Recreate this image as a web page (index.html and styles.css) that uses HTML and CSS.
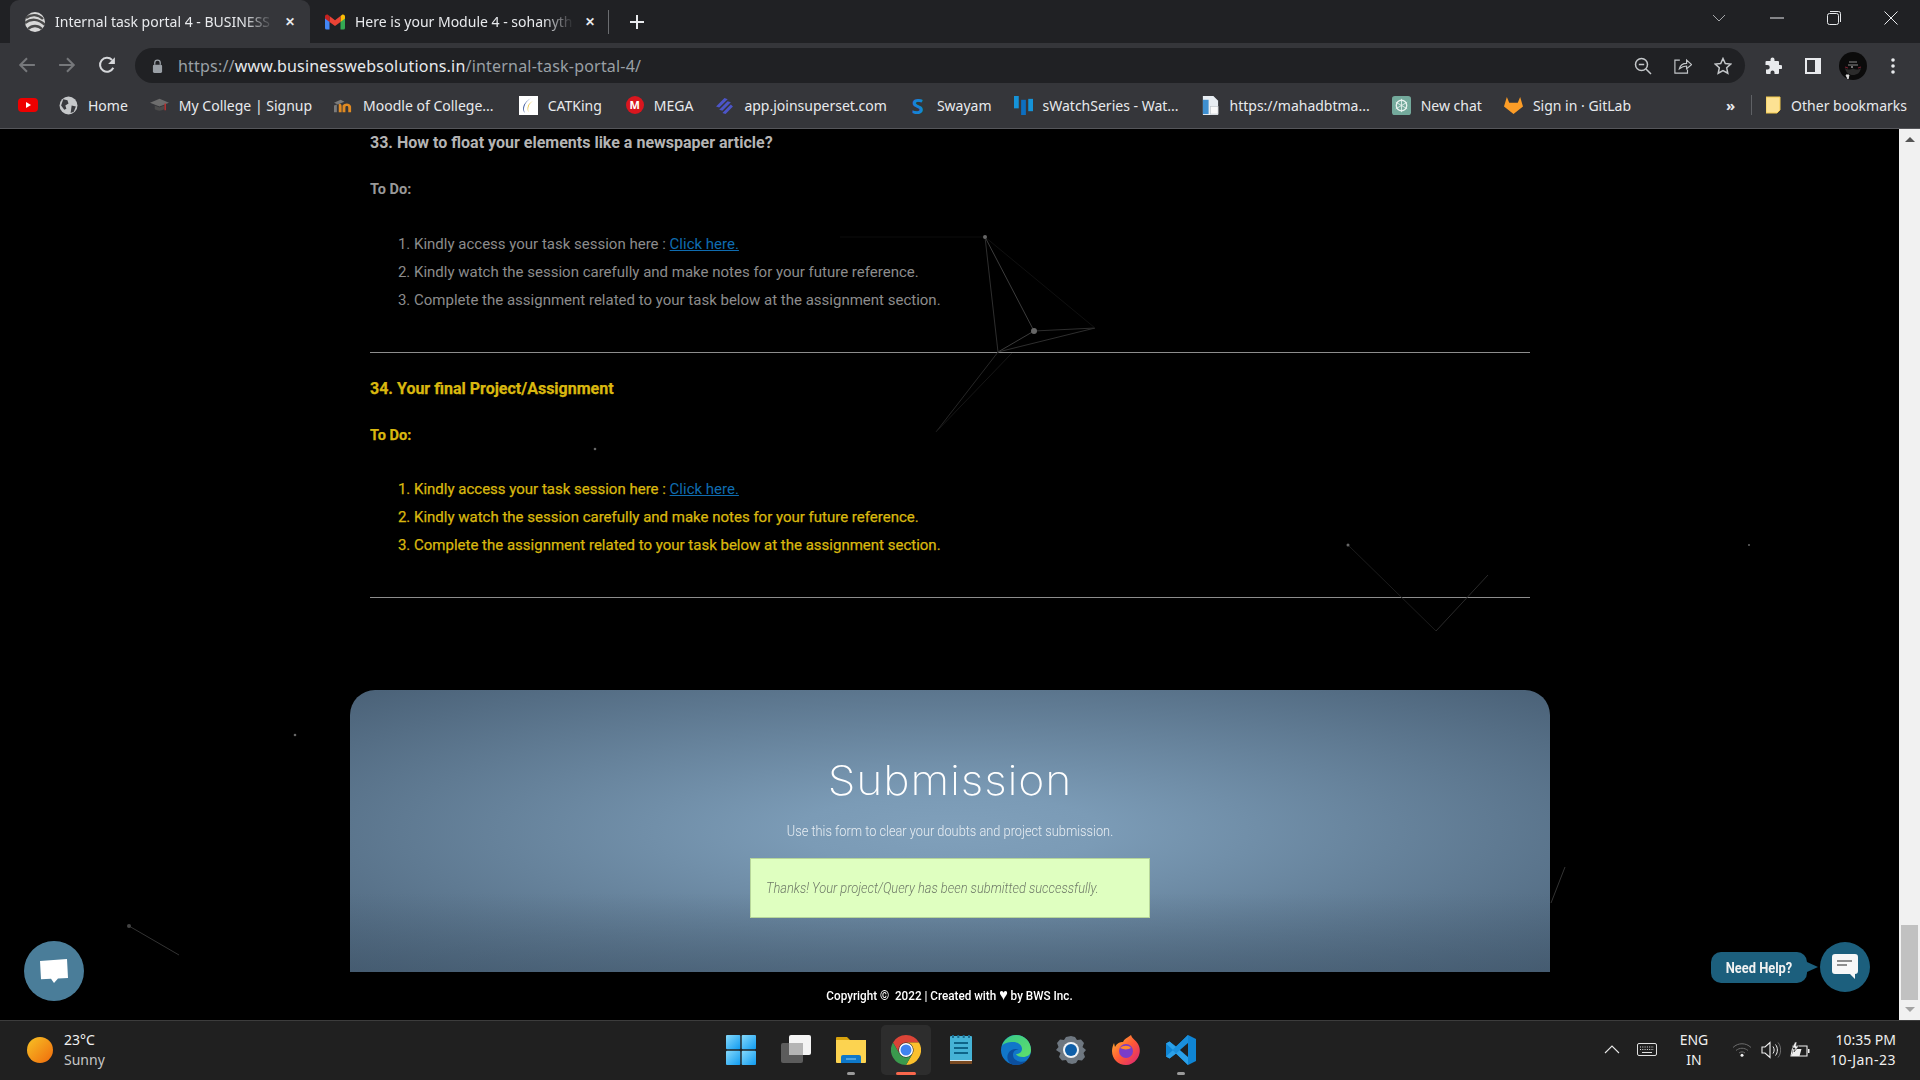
FILE: index.html
```html
<!DOCTYPE html>
<html>
<head>
    <title>Internal task portal 4 - BUSINESS WEB SOLUTIONS</title>
    <link rel="stylesheet" href="styles.css">
</head>
<body>
    <div class="tabstrip">
        <div class="tab tab-active">
            <svg class="favicon" viewBox="0 0 20 20"><circle cx="10" cy="10" r="10" fill="#d8d8d8"/><path d="M1 6c5-4 12-4 17 1M0 11c6-5 14-4 20 2M3 17c4-4 10-4 14 0" fill="none" stroke="#4a4a4a" stroke-width="2.4"/></svg>
            <span class="tab-title">Internal task portal 4 - BUSINESS</span>
            <span class="tab-close">&#10005;</span>
        </div>
        <div class="tab">
            <svg class="favicon" viewBox="0 0 20 16"><path d="M0 3v11a1.500 1.500 0 0 0 1.500 1.500H4.500V7z" fill="#4285f4"/><path d="M20 3v11a1.500 1.500 0 0 1-1.500 1.500H15.500V7z" fill="#34a853"/><path d="M15.500 2v6l4.500-3.500V2.500C20 .8 18 0 16.800 1z" fill="#fbbc04"/><path d="M4.500 8V2L10 6.200 15.500 2v6L10 12z" fill="#ea4335"/><path d="M0 4.500V2.500C0 .8 2 0 3.200 1L4.500 2v6z" fill="#c5221f"/></svg>
            <span class="tab-title">Here is your Module 4 - sohanyth</span>
            <span class="tab-close">&#10005;</span>
        </div>
        <span class="tab-divider"></span>
        <svg class="tab-plus" viewBox="0 0 14 14"><path d="M7 0v14M0 7h14" stroke="#e8eaed" stroke-width="2"/></svg>
        <div class="window-controls">
            <svg class="win-icon" viewBox="0 0 14 8"><path d="M1 1l6 6 6-6" fill="none" stroke="#a5a7aa" stroke-width="1"/></svg>
            <svg class="win-icon win-min" viewBox="0 0 14 14"><path d="M0 7h14" stroke="#e8eaed" stroke-width="1"/></svg>
            <svg class="win-icon win-restore" viewBox="0 0 14 14"><rect x=".5" y="2.500" width="11" height="11" rx="2" fill="none" stroke="#e8eaed"/><path d="M3 .5h8.500a2 2 0 0 1 2 2V11" fill="none" stroke="#e8eaed"/></svg>
            <svg class="win-icon win-close" viewBox="0 0 14 14"><path d="M.5.5l13 13M13.500.5l-13 13" stroke="#e8eaed" stroke-width="1"/></svg>
        </div>
    </div>

    <div class="toolbar">
        <svg class="nav-icon nav-back" viewBox="0 0 16 16"><path d="M15 8H2M8 2L2 8l6 6" fill="none" stroke="#76787b" stroke-width="1.800"/></svg>
        <svg class="nav-icon nav-forward" viewBox="0 0 16 16"><path d="M1 8h13M8 2l6 6-6 6" fill="none" stroke="#76787b" stroke-width="1.800"/></svg>
        <svg class="nav-icon nav-reload" viewBox="0 0 16 16"><path d="M13.600 10.500A6.200 6.200 0 1 1 12.500 3.500" fill="none" stroke="#d5d7da" stroke-width="1.800"/><path d="M15 1v6H9z" fill="#d5d7da"/></svg>
        <div class="omnibox">
            <svg class="lock" viewBox="0 0 12 15"><path d="M3 6V4a3 3 0 0 1 6 0v2" fill="none" stroke="#9aa0a6" stroke-width="1.400"/><rect x="1" y="6" width="10" height="9" rx="1.500" fill="#9aa0a6"/></svg>
            <span class="url"><span class="url-dim">https://</span>www.businesswebsolutions.in<span class="url-dim">/internal-task-portal-4/</span></span>
            <div class="omni-actions">
                <svg class="nav-icon" viewBox="0 0 18 18"><circle cx="7.500" cy="7.500" r="6" fill="none" stroke="#c4c7ca" stroke-width="1.500"/><path d="M4.800 7.500h5.400M12 12l5 5" stroke="#c4c7ca" stroke-width="1.500"/></svg>
                <svg class="nav-icon" viewBox="0 0 20 18"><path d="M6.500 2.500H1v14.500h14v-4" fill="none" stroke="#c4c7ca" stroke-width="1.300"/><path d="M6 12c1-4 4-6 8-6V2.500L19.500 7.500 14 12V9c-3 0-5.500 1-8 3z" fill="none" stroke="#c4c7ca" stroke-width="1.300"/></svg>
                <svg class="nav-icon" viewBox="0 0 18 18"><path d="M9 1.500l2.300 5 5.400.6-4 3.700 1.100 5.400L9 13.500l-4.800 2.700 1.100-5.400-4-3.700 5.400-.6z" fill="none" stroke="#c4c7ca" stroke-width="1.500"/></svg>
            </div>
        </div>
        <div class="toolbar-right">
            <svg class="tool-icon" viewBox="0 0 18 18"><path d="M6.500 2.500a2 2 0 0 1 4 0V4H14a1 1 0 0 1 1 1v3h1.500a2 2 0 0 1 0 4H15v4a1 1 0 0 1-1 1h-3.500v-1.500a2 2 0 0 0-4 0V17H3a1 1 0 0 1-1-1v-3.500h1.500a2.200 2.200 0 0 0 0-4.500H1.500V5a1 1 0 0 1 1-1h4z" fill="#e8eaed"/></svg>
            <svg class="tool-icon" viewBox="0 0 18 18"><rect x="1" y="1" width="16" height="16" fill="#e8eaed"/><rect x="3" y="3" width="8" height="12" fill="#35363a"/></svg>
            <svg class="avatar" viewBox="0 0 28 28"><circle cx="14" cy="14" r="14" fill="#0b0b0b"/><path d="M9 13h10M10 10h8" stroke="#8a8a8a" stroke-width="1"/><path d="M6 16c3 2 5 2 8 .5 3 1.500 5 1.500 8-.5-1 5-4 7-8 7s-7-2-8-7z" fill="#2b2b2b"/><path d="M7 23l2 4 1-4zM12 15h2" stroke="#ddd" fill="#ddd"/><path d="M6 15l3 1M19 16l3-1" stroke="#7a2030" stroke-width="1.200"/></svg>
            <svg class="tool-icon" viewBox="0 0 4 18"><circle cx="2" cy="3" r="1.800" fill="#e8eaed"/><circle cx="2" cy="9" r="1.800" fill="#e8eaed"/><circle cx="2" cy="15" r="1.800" fill="#e8eaed"/></svg>
        </div>
    </div>

    <div class="bookmarks">
        <div class="bm"><svg class="bm-yt" viewBox="0 0 20 14"><rect width="20" height="14" rx="4" fill="#e00"/><path d="M8 4l5 3-5 3z" fill="#fff"/></svg></div>
        <div class="bm"><svg class="bm-icon" viewBox="0 0 18 18"><circle cx="9" cy="9" r="8.500" fill="#c6c8ca"/><path d="M4 3l4 1 1 3-3 2 1 3-2 1-3-4zM12 9l4 1-2 5-3 1z" fill="#3a3b3f"/></svg><span>Home</span></div>
        <div class="bm"><svg class="bm-icon" viewBox="0 0 20 18"><path d="M0 6l10-4 10 4-10 4z" fill="#6d6d6d"/><path d="M5 9v4c3 2 7 2 10 0V9l-5 2z" fill="#4c4c4c"/><path d="M16 7v7" stroke="#b33" stroke-width="1.600"/></svg><span>My College | Signup</span></div>
        <div class="bm"><svg class="bm-icon" viewBox="0 0 20 18"><path d="M5 7a3 3 0 0 1 3 3v6h-3zM9 9c2-3 8-3 9 1v6h-3v-5c0-2-3-2-3 0v5H9z" fill="#e08a22"/><path d="M0 16V9l3-1v8z" fill="#7b7b7b"/><path d="M0 6l7-3 4 2-7 3z" fill="#7b7b7b"/></svg><span>Moodle of College...</span></div>
        <div class="bm bm-cat"><svg class="bm-icon" viewBox="0 0 20 20"><rect width="20" height="20" fill="#fff"/><path d="M13 2C6 6 4 12 6 18c-3-5-2-11 7-16z" fill="#1f3f8a"/><path d="M15 5c-5 3-6 8-5 12-2-4-1-9 5-12z" fill="#e2b71c"/></svg><span>CATKing</span></div>
        <div class="bm bm-meg"><span class="bm-mega">M</span><span>MEGA</span></div>
        <div class="bm"><svg class="bm-icon" viewBox="0 0 18 18"><path d="M1 10l8-8 3 1-8 8zM4 13l8-8 3 1-8 8zM7 16l8-8 2 2-7 7z" fill="#4c55c8"/></svg><span>app.joinsuperset.com</span></div>
        <div class="bm"><span class="bm-swayam">S</span><span>Swayam</span></div>
        <div class="bm"><svg class="bm-icon" viewBox="0 0 20 20"><rect x="0" y="0" width="5" height="13" fill="#1593d8"/><rect x="7.500" y="4" width="5" height="16" fill="#0d6fc0"/><rect x="15" y="3" width="5" height="13" fill="#1593d8"/></svg><span>sWatchSeries - Wat...</span></div>
        <div class="bm"><svg class="bm-icon" viewBox="0 0 20 20"><path d="M2 0h11l5 5v15H2z" fill="#e8edf2"/><rect x="2" y="4" width="6" height="15" fill="#3e8fd0"/><rect x="10" y="11" width="8" height="8" fill="#fafafa" stroke="#b8bec4" stroke-width=".6"/></svg><span>https://mahadbtma...</span></div>
        <div class="bm"><svg class="bm-icon" viewBox="0 0 20 20"><rect width="20" height="20" rx="3" fill="#74aa9c"/><circle cx="10" cy="10" r="5.500" fill="none" stroke="#e8f2ee" stroke-width="1.400"/><path d="M10 3v14M4 6.500l12 7M16 6.500l-12 7" stroke="#e8f2ee" stroke-width=".9"/></svg><span>New chat</span></div>
        <div class="bm"><svg class="bm-icon" viewBox="0 0 20 20"><path d="M3 1l2.500 6h9L17 1l3 10-10 8L0 11z" fill="#fc9d27"/></svg><span>Sign in · GitLab</span></div>
        <div class="bm-end">
            <span class="bm-more">&raquo;</span>
            <span class="bm-sep"></span>
            <div class="bm"><svg class="bm-folder" viewBox="0 0 15 18"><path d="M0 1h14v13l-3 3H0z" fill="#fde293" stroke="#f2c94c"/></svg><span>Other bookmarks</span></div>
        </div>
    </div>

    <div class="viewport">
        <div class="page">
            <main class="page-inner">
                <section class="task task-done">
                    <h3>33. How to float your elements like a newspaper article?</h3>
                    <p class="todo">To Do:</p>
                    <ol>
                        <li>Kindly access your task session here : <a href="#">Click here.</a></li>
                        <li>Kindly watch the session carefully and make notes for your future reference.</li>
                        <li>Complete the assignment related to your task below at the assignment section.</li>
                    </ol>
                </section>
                <hr class="rule">
                <section class="task task-current">
                    <h3>34. Your final Project/Assignment</h3>
                    <p class="todo">To Do:</p>
                    <ol>
                        <li>Kindly access your task session here : <a href="#">Click here.</a></li>
                        <li>Kindly watch the session carefully and make notes for your future reference.</li>
                        <li>Complete the assignment related to your task below at the assignment section.</li>
                    </ol>
                </section>
                <hr class="rule">
            </main>
            <section class="submission">
                <h2>Submission</h2>
                <p class="sub-lead">Use this form to clear your doubts and project submission.</p>
                <div class="success"><span>Thanks! Your project/Query has been submitted successfully.</span></div>
            </section>
            <footer class="copyright">Copyright &copy;&nbsp; 2022 | Created with <span class="heart">&#9829;</span> by BWS Inc.</footer>
        </div>

        <svg class="particles" viewBox="0 0 1899 891">
            <g transform="translate(0 -129)" fill="none">
                <path d="M840 237L985 237" stroke="#0c0c0c"/>
                <path d="M985 237L1034 331M1034 331L998 352" stroke="#3c3c3c"/>
                <path d="M985 237L998 352M1034 331L1095 328M1095 328L998 352" stroke="#2e2e2e"/>
                <path d="M985 237L1095 328" stroke="#101010"/>
                <path d="M998 352L936 432" stroke="#262626"/>
                <path d="M1012 353L936 432" stroke="#161616"/>
                <path d="M1348 545L1436 631" stroke="#1c1c1c"/>
                <path d="M1436 631L1488 575" stroke="#2a2a2a"/>
                <path d="M129 926L179 955" stroke="#333"/>
                <path d="M1565 867L1551 903" stroke="#333"/>
                <g fill="#666" stroke="none">
                    <circle cx="985" cy="237" r="2"/>
                    <circle cx="1034" cy="331" r="3"/>
                    <circle cx="595" cy="449" r="1.300"/>
                    <circle cx="295" cy="735" r="1.300"/>
                    <circle cx="1749" cy="545" r="1"/>
                    <circle cx="1348" cy="545" r="1.500"/>
                    <circle cx="129" cy="926" r="2" fill="#444"/>
                </g>
            </g>
        </svg>

        <div class="chat-left">
            <svg viewBox="0 0 30 26"><path d="M1 3l27-2 1 19-10 .5L15 25l-3-4.300-10 .5z" fill="#fff"/></svg>
        </div>
        <div class="help">
            <span class="help-label"><span>Need Help?</span></span>
            <div class="help-btn">
                <svg viewBox="0 0 26 26"><path d="M3 0h20a3 3 0 0 1 3 3v14a3 3 0 0 1-3 3v5l-5-5H3a3 3 0 0 1-3-3V3a3 3 0 0 1 3-3z" fill="#f7f7f7"/><path d="M5 7h15" stroke="#6a6a6a" stroke-width="1.500"/><path d="M5 11h10" stroke="#6a6a6a" stroke-width="1.500"/></svg>
            </div>
        </div>

        <div class="scrollbar">
            <span class="arrow-up"></span>
            <span class="thumb"></span>
            <span class="arrow-down"></span>
        </div>
    </div>

    <div class="taskbar">
        <div class="weather">
            <span class="sun"></span>
            <div class="weather-text">
                <span>23°C</span>
                <span class="weather-dim">Sunny</span>
            </div>
        </div>
        <div class="task-icons">
            <div class="task-app">
                <svg class="app-icon" viewBox="0 0 30 30"><defs><linearGradient id="win" x1="0" y1="0" x2="1" y2="1"><stop offset="0" stop-color="#86d9fb"/><stop offset="1" stop-color="#0f9bf0"/></linearGradient></defs><rect width="14.300" height="14.300" rx="1" fill="url(#win)"/><rect x="15.700" width="14.300" height="14.300" rx="1" fill="url(#win)"/><rect y="15.700" width="14.300" height="14.300" rx="1" fill="url(#win)"/><rect x="15.700" y="15.700" width="14.300" height="14.300" rx="1" fill="url(#win)"/></svg>
            </div>
            <div class="task-app">
                <svg class="app-icon" viewBox="0 0 30 30"><rect y="8" width="22" height="20" rx="2" fill="#5c5c5c"/><rect x="8" y="0" width="22" height="20" rx="2" fill="#f4f4f4"/><rect x="8" y="8" width="14" height="12" fill="#b5b5b5"/></svg>
            </div>
            <div class="task-app task-running">
                <svg class="app-icon" viewBox="0 0 30 30"><path d="M0 3a1 1 0 0 1 1-1h10l3 3H0z" fill="#d8a20d"/><path d="M0 5h30v22a1 1 0 0 1-1 1H1a1 1 0 0 1-1-1z" fill="#fcd350"/><path d="M5 22a2 2 0 0 1 2-2h16a2 2 0 0 1 2 2v6H5z" fill="#0e78c9"/><path d="M10 24h10" stroke="#8fd0f5" stroke-width="1"/></svg>
            </div>
            <div class="task-app task-active">
                <svg class="app-icon" viewBox="0 0 24 24"><path d="M12 0A12 12 0 0 1 22.400 6H12a6 6 0 0 0-5.200 9L1.600 6A12 12 0 0 1 12 0z" fill="#db4437"/><path d="M22.400 6A12 12 0 0 1 12 24l5.200-9A6 6 0 0 0 12 6z" fill="#fbc02d"/><path d="M12 24A12 12 0 0 1 1.600 6l5.200 9a6 6 0 0 0 10.400 0z" fill="#3a9a4d"/><circle cx="12" cy="12" r="5.600" fill="#fff"/><circle cx="12" cy="12" r="4.400" fill="#3f83f0"/></svg>
            </div>
            <div class="task-app">
                <svg class="app-icon app-notepad" viewBox="0 0 22 30"><rect y="1" width="22" height="28" rx="1" fill="#45b3d6"/><rect y="26" width="22" height="3" fill="#7a4a22"/><rect y="25" width="22" height="1" fill="#dfe8ec"/><path d="M3 0v3M8.300 0v3M13.700 0v3M19 0v3" stroke="#1b6e92" stroke-width="2"/><path d="M4 8h14M4 13h14M4 18h14" stroke="#0e6488" stroke-width="1.800"/></svg>
            </div>
            <div class="task-app">
                <svg class="app-icon" viewBox="0 0 30 30"><defs><linearGradient id="edge" x1="0" y1="0" x2="1" y2="1"><stop offset="0" stop-color="#37c98b"/><stop offset="1" stop-color="#60e06a"/></linearGradient></defs><circle cx="15" cy="15" r="15" fill="#1177c9"/><path d="M1 11C3 4 9 0 15 0c9 0 15 7 15 15 0 5-4 7-8 7s-6-1-7-3c3 0 6-2 6-5 0-3-3-7-9-7-5 0-9 1-11 4z" fill="url(#edge)"/><path d="M15 30C8 30 5 24 7 19c2-5 8-6 11-4-4-1-6 2-6 5 0 5 6 8 13 6-3 3-6 4-10 4z" fill="#0c4f9e"/></svg>
            </div>
            <div class="task-app">
                <svg class="app-icon" viewBox="0 0 30 30"><path d="M15 1l4 1 2 3 4-.5 3 3.500-1.500 4L30 15l-2.500 3 1.500 4-3 3.500-4-.5-2 3-4 1-4-1-2-3-4 .5-3-3.500 1.500-4L0 15l2.500-3L1 8l3-3.500L8 5l2-3z" fill="#6e7780"/><circle cx="15" cy="15" r="8" fill="#f0f3f5"/><circle cx="15" cy="15" r="6" fill="#0f5fa8"/></svg>
            </div>
            <div class="task-app">
                <svg class="app-icon" viewBox="0 0 30 30"><defs><linearGradient id="fox" x1="0" y1="0" x2="1" y2="1"><stop offset="0" stop-color="#ffbd2e"/><stop offset=".5" stop-color="#ff5a36"/><stop offset="1" stop-color="#d8207c"/></linearGradient></defs><path d="M20 0c1 4 5 5 7 9 3 5 2 11-1 15-3 4-7 6-11 6C7 30 1 24 1 16c0-3 1-6 2-8l1 4c2-4 5-5 8-5 1-3 4-4 8-7z" fill="url(#fox)"/><circle cx="15" cy="16" r="7" fill="#7a3cc9"/><path d="M9 13c3-3 9-3 11 0-2 1-5 2-8 1z" fill="#ff8a2e"/></svg>
            </div>
            <div class="task-app task-running">
                <svg class="app-icon" viewBox="0 0 30 30"><path d="M22 0l8 4v22l-8 4-12-11.500-6.500 5L0 21.500V8.500l3.500-2L10 11.500z" fill="#0f85d4"/><path d="M0 8.500l3.500-2L22 22v8l-12-11.500-6.500 5L0 21.500l7-6.500z" fill="#2ba0e8"/><path d="M22 8L10 18.500 6.500 15 22 0z" fill="#1a8fdc"/><path d="M22 8v14l-8-7z" fill="#202020"/></svg>
            </div>
        </div>
        <div class="tray">
            <svg class="tray-chev" viewBox="0 0 16 9"><path d="M1 8l7-7 7 7" fill="none" stroke="#e8e8e8" stroke-width="1.100"/></svg>
            <svg class="tray-kbd" viewBox="0 0 20 13"><rect x=".5" y=".5" width="19" height="12" rx="1.500" fill="none" stroke="#e0e0e0"/><path d="M3 4h14M3 6.500h14" stroke="#e0e0e0" stroke-dasharray="1 1.300"/><path d="M5 9.500h10" stroke="#e0e0e0"/></svg>
            <div class="tray-lang"><span>ENG</span><span>IN</span></div>
            <div class="tray-status">
                <svg class="tray-wifi" viewBox="0 0 20 15"><path d="M1 5.500c5-5 13-5 18 0M4 8.500c3.500-3 8.500-3 12 0M7 11c1.800-1.500 4.200-1.500 6 0" fill="none" stroke="#6b6b6b" stroke-width="1"/><circle cx="10" cy="13.300" r="1.500" fill="#f0f0f0"/></svg>
                <svg class="tray-vol" viewBox="0 0 20 18"><path d="M1 6h3l5-4.500v15L4 12H1z" fill="none" stroke="#f0f0f0" stroke-width="1.100"/><path d="M12 5.500c1.500 2 1.500 5 0 7M14.500 3.500c2.500 3 2.500 8 0 11" fill="none" stroke="#f0f0f0"/><path d="M17 1.500c3.500 4 3.500 11 0 15" fill="none" stroke="#6b6b6b"/></svg>
                <svg class="tray-batt" viewBox="0 0 20 16"><path d="M3 4h14v10H1z" fill="none" stroke="#f0f0f0" stroke-width="1.100"/><rect x="18" y="7" width="1.500" height="4" fill="#f0f0f0"/><path d="M1.500 14l2-7h8l-2 7z" fill="#f0f0f0"/><path d="M5 0L2 6h3L4 10l5-6H6l1-4z" fill="#f0f0f0" stroke="#202020" stroke-width=".6"/></svg>
            </div>
            <div class="tray-clock"><span>10:35 PM</span><span class="tray-date">10-Jan-23</span></div>
        </div>
    </div>
</body>
</html>
```

FILE: styles.css
```css
* {
    box-sizing: border-box;
}
html, body {
    margin: 0;
    height: 100%;
}
body {
    width: 1920px;
    height: 1080px;
    overflow: hidden;
    display: flex;
    flex-direction: column;
    background: #000;
    font-family: "Noto Sans", sans-serif;
    color: #e8eaed;
}

/* browser chrome */
.tabstrip {
    height: 43px;
    flex: none;
    display: flex;
    align-items: center;
    padding-left: 10px;
    background: #202124;
}
.tab {
    width: 300px;
    height: 43px;
    flex: none;
    display: flex;
    align-items: center;
    gap: 10px;
    padding: 0 14px 0 15px;
    font-size: 14px;
    border-radius: 9px 9px 0 0;
}
.tab-active {
    background: #35363a;
}
.favicon {
    width: 20px;
    height: 20px;
    flex: none;
}
.tab-title {
    flex: 1;
    min-width: 0;
    white-space: nowrap;
    -webkit-mask-image: linear-gradient(to right, #000 86%, transparent 100%);
    mask-image: linear-gradient(to right, #000 86%, transparent 100%);
}
.tab-close {
    flex: none;
    font-size: 12px;
    font-weight: 700;
    width: 12px;
    text-align: center;
}
.tab-divider {
    width: 1px;
    height: 24px;
    margin-left: -2px;
    background: #6b6d70;
}
.tab-plus {
    width: 14px;
    height: 14px;
    margin-left: 21px;
}
.window-controls {
    margin-left: auto;
    display: flex;
    align-items: center;
    align-self: flex-start;
    height: 36px;
    padding-right: 22px;
}
.win-icon {
    width: 14px;
    height: 14px;
    margin-left: 43px;
}
.win-min {
    margin-left: 44px;
}

.toolbar {
    height: 40px;
    flex: none;
    display: flex;
    align-items: flex-start;
    background: #35363a;
    padding-top: 5px;
}
.nav-icon {
    width: 18px;
    height: 18px;
    flex: none;
}
.nav-back {
    margin: 8px 0 0 18px;
}
.nav-forward {
    margin: 8px 0 0 22px;
}
.nav-reload {
    margin: 8px 0 0 22px;
}
.omnibox {
    width: 1610px;
    height: 35px;
    flex: none;
    margin-left: 19px;
    display: flex;
    align-items: center;
    padding-left: 17px;
    background: #202124;
    border-radius: 18px;
}
.lock {
    width: 11px;
    height: 14px;
}
.url {
    margin-left: 15px;
    font-size: 16px;
    letter-spacing: .2px;
    white-space: nowrap;
}
.url-dim {
    color: #9aa0a6;
}
.omni-actions {
    margin-left: auto;
    display: flex;
    gap: 22px;
    padding-right: 13px;
}
.toolbar-right {
    display: flex;
    align-items: center;
    height: 35px;
    padding-left: 19px;
}
.tool-icon {
    width: 18px;
    height: 18px;
    margin-right: 22px;
    flex: none;
}
.avatar {
    width: 28px;
    height: 28px;
    flex: none;
    margin: 0 17px 0 -5px;
}

.bookmarks {
    height: 46px;
    flex: none;
    display: flex;
    align-items: center;
    gap: 22px;
    padding: 0 13px 1px 18px;
    font-size: 14px;
    background: #35363a;
    border-bottom: 1px solid #55565a;
}
.bm {
    display: flex;
    align-items: center;
    gap: 10px;
    white-space: nowrap;
}
.bm-cat {
    margin-left: 3px;
}
.bm-meg {
    margin-left: 2px;
}
.bm-yt {
    width: 20px;
    height: 14px;
    margin-right: -1px;
}
.bm-icon {
    width: 19px;
    height: 19px;
    flex: none;
}
.bm-mega {
    width: 18px;
    height: 18px;
    border-radius: 50%;
    background: #d9161e;
    color: #fff;
    font-size: 11px;
    font-weight: 700;
    line-height: 18px;
    text-align: center;
}
.bm-swayam {
    width: 18px;
    color: #1584d6;
    font-size: 22px;
    font-weight: 700;
    line-height: 20px;
    text-align: center;
}
.bm-end {
    margin-left: auto;
    display: flex;
    align-items: center;
}
.bm-more {
    font-size: 15px;
    font-weight: 700;
    margin-right: 16px;
}
.bm-sep {
    width: 1px;
    height: 20px;
    background: #5f6165;
    margin-right: 14px;
}
.bm-folder {
    width: 15px;
    height: 18px;
}

/* page */
.viewport {
    position: relative;
    flex: 1;
    display: flex;
    overflow: hidden;
    background: #000;
}
.page {
    width: 1899px;
    flex: none;
    overflow: hidden;
    font-family: Roboto, sans-serif;
}
.page-inner {
    width: 1160px;
    margin-left: 370px;
}
.task h3 {
    margin: 0;
    padding-top: 1px;
    font-size: 16px;
    font-weight: 700;
    line-height: 26px;
}
.todo {
    margin: 21px 0 0;
    font-size: 14.5px;
    font-weight: 700;
    line-height: 26px;
}
.task ol {
    margin: 27px 0 0;
    padding-left: 44px;
    font-size: 15px;
    line-height: 28px;
}
.task a {
    color: #0f6cb0;
}
.task-done {
    color: #8c8c8c;
}
.task-done h3 {
    color: #b4b4b4;
}
.task-done .todo {
    color: #999;
}
.task-current {
    color: #d9b80f;
    -webkit-text-stroke: .25px #d9b80f;
}
.task-current a {
    -webkit-text-stroke: 0;
}
.task-current ol {
    margin-top: 26px;
}
.rule {
    height: 1px;
    margin: 38px 0 22px;
    border: 0;
    background: #8d8d8d;
}

.submission {
    width: 1200px;
    height: 282px;
    margin: 92px 0 0 350px;
    padding-top: 66px;
    text-align: center;
    color: #fff;
    border-radius: 25px 25px 0 0;
    background:
        linear-gradient(to top, rgba(63, 85, 105, .45), transparent 28%),
        radial-gradient(ellipse farthest-corner at 50% 50%, #80a0bb 0%, #7b9bb6 18%, #4a6177 100%);
}
.submission h2 {
    margin: 0;
    font-family: Inter, sans-serif;
    font-size: 41px;
    font-weight: 200;
    line-height: 48px;
    letter-spacing: .8px;
    transform: scaleX(1.085);
}
.sub-lead {
    margin: 16px 0 0;
    font-size: 14px;
    font-weight: 300;
    line-height: 22px;
    color: #e8eef3;
    transform: scaleX(.913);
}
.success {
    width: 400px;
    height: 60px;
    margin: 16px auto 0;
    padding: 0 15px;
    display: flex;
    align-items: center;
    font-size: 14px;
    font-style: italic;
    font-weight: 300;
    color: #6f7a68;
    background: #dfffc0;
    border: 1px solid #b7d69a;
    white-space: nowrap;
}
.success span {
    transform: scaleX(.917);
    transform-origin: left center;
}
.copyright {
    margin-top: 14px;
    text-align: center;
    font-size: 13px;
    font-weight: 500;
    line-height: 20px;
    color: #fff;
    transform: scaleX(.9);
}
.heart {
    font-size: 16px;
    line-height: 16px;
}

/* canvas particles, floating buttons */
.particles {
    position: absolute;
    left: 0;
    top: 0;
    width: 1899px;
    height: 891px;
    pointer-events: none;
}
.chat-left {
    position: absolute;
    left: 24px;
    top: 812px;
    width: 60px;
    height: 60px;
    display: flex;
    align-items: center;
    justify-content: center;
    border-radius: 50%;
    background: #4a7d99;
}
.chat-left svg {
    width: 30px;
    height: 26px;
}
.help {
    position: absolute;
    left: 1711px;
    top: 813px;
    display: flex;
    align-items: center;
}
.help-label {
    position: relative;
    width: 96px;
    height: 31px;
    margin-right: 13px;
    border-radius: 10px;
    background: #1c5f7d;
    color: #f2f2f2;
    font-family: Roboto, sans-serif;
    font-size: 14px;
    font-weight: 700;
    line-height: 32px;
    text-align: center;
}
.help-label span {
    display: block;
    transform: scaleX(.92);
}
.help-label::after {
    content: "";
    position: absolute;
    left: 96px;
    top: 10px;
    border-left: 11px solid #1c5f7d;
    border-top: 5px solid transparent;
    border-bottom: 5px solid transparent;
}
.help-btn {
    width: 50px;
    height: 50px;
    display: flex;
    align-items: center;
    justify-content: center;
    border-radius: 50%;
    background: #1c5f7d;
}
.help-btn svg {
    width: 26px;
    height: 26px;
}

.scrollbar {
    width: 21px;
    flex: none;
    display: flex;
    flex-direction: column;
    align-items: center;
    justify-content: flex-end;
    background: #f1f1f1;
    position: relative;
}
.arrow-up {
    position: absolute;
    top: 8px;
    border-bottom: 5px solid #555;
    border-left: 5px solid transparent;
    border-right: 5px solid transparent;
}
.thumb {
    width: 17px;
    height: 75px;
    background: #c1c1c1;
}
.arrow-down {
    height: 5px;
    width: 0;
    margin: 7px 0 8px;
    border-top: 5px solid #a3a3a3;
    border-left: 5px solid transparent;
    border-right: 5px solid transparent;
}

/* windows taskbar */
.taskbar {
    height: 60px;
    flex: none;
    display: grid;
    grid-template-columns: 1fr auto 1fr;
    align-items: center;
    padding-bottom: 2px;
    background: #202020;
    border-top: 1px solid #3c3c3c;
    color: #f0f0f0;
    font-size: 14px;
}
.weather {
    display: flex;
    align-items: center;
    gap: 11px;
    padding-left: 27px;
}
.sun {
    width: 26px;
    height: 26px;
    border-radius: 50%;
    background: linear-gradient(135deg, #f7c325, #f06a0c);
}
.weather-text {
    display: flex;
    flex-direction: column;
    line-height: 20px;
}
.weather-dim {
    color: #c6c6c6;
}
.task-icons {
    display: flex;
    gap: 5px;
    padding-left: 1px;
}
.task-app {
    position: relative;
    width: 50px;
    height: 50px;
    display: flex;
    align-items: center;
    justify-content: center;
    border-radius: 5px;
}
.task-active {
    background: #2d2d2d;
}
.task-running::after,
.task-active::after {
    content: "";
    position: absolute;
    bottom: 0;
    left: 21px;
    width: 8px;
    height: 3px;
    border-radius: 2px;
    background: #9a9a9a;
}
.task-active::after {
    left: 15px;
    width: 20px;
    background: #f9674c;
}
.app-icon {
    width: 30px;
    height: 30px;
}
.app-notepad {
    width: 22px;
}
.tray {
    display: flex;
    align-items: center;
    justify-content: flex-end;
    padding-right: 24px;
}
.tray-chev {
    width: 16px;
    height: 9px;
}
.tray-kbd {
    width: 20px;
    height: 13px;
    margin-left: 17px;
}
.tray-lang {
    display: flex;
    flex-direction: column;
    align-items: center;
    line-height: 20px;
    margin-left: 22px;
    width: 30px;
}
.tray-status {
    display: flex;
    align-items: center;
    gap: 9px;
    margin-left: 23px;
}
.tray-wifi {
    width: 20px;
    height: 15px;
}
.tray-vol {
    width: 20px;
    height: 18px;
}
.tray-batt {
    width: 20px;
    height: 16px;
}
.tray-clock {
    display: flex;
    flex-direction: column;
    align-items: flex-end;
    line-height: 20px;
    margin-left: 12px;
    width: 74px;
}
.tray-date {
    letter-spacing: .5px;
}
```
